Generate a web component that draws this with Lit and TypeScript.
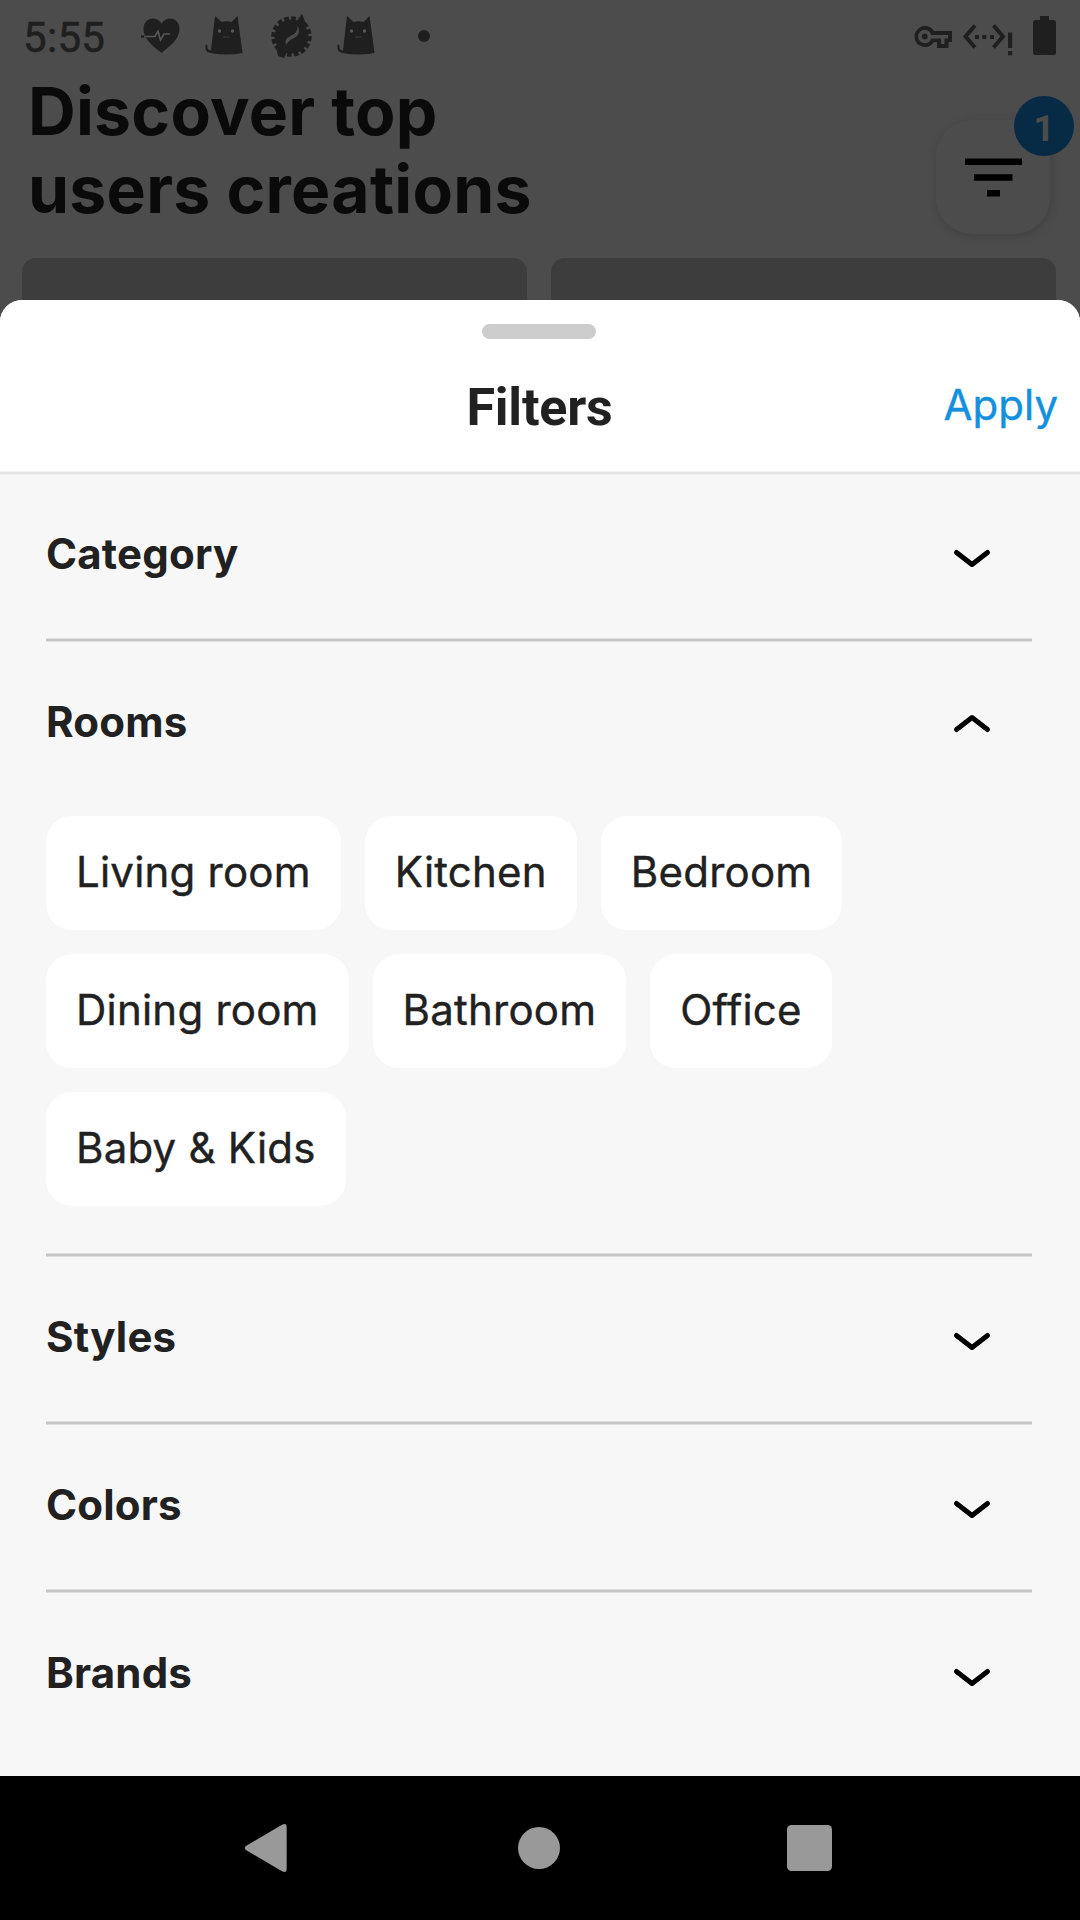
import { LitElement, html, svg, css } from "lit";
import { customElement, property } from "lit/decorators.js";

const cat = svg`<path d="M10.500 1 L17 7 Q22 5.500 27 7 L33 1 L38 38 Q22 41 6 38 Q0 37 1 30.500 Q2.200 28.500 3 31 Q2.500 35 6.500 35.500 Z"/>
  <circle class="hole" cx="15" cy="16" r="1.700"/><circle class="hole" cx="28" cy="16" r="1.700"/>
  <path class="faint" d="M18.500 22H25"/>`;

@customElement("status-bar")
export class StatusBar extends LitElement {
  static styles = css`
    :host { display: flex; align-items: center; height: 72px; padding: 0 23px 0 23px; box-sizing: border-box; }
    .time { font: 400 42px/72px Roboto, sans-serif; color: #1f1f1f; width: 118px; padding-top: 2px; height: 72px; box-sizing: border-box; letter-spacing: 0.3px; -webkit-text-stroke: 0.6px #1f1f1f; }
    svg { display: block; fill: #1f1f1f; flex: none; }
    .hole { fill: #575757; }
    .faint { stroke: #333; stroke-width: 1.5; fill: none; }
    .pulse { fill: none; stroke: #575757; stroke-width: 1.6; }
    .tail { fill: none; stroke: #1f1f1f; stroke-width: 2.4; }
    .line { fill: none; stroke: #1f1f1f; stroke-width: 4; }
    .space { flex: 1; }
    .teeth { fill: none; stroke: #1f1f1f; stroke-width: 4.5; stroke-dasharray: 4.6 2.4; }
    .gap { fill: #4c4c4c; }
  `;
  render() {
    return html`
      <span class="time">5:55</span>
      <svg width="44" height="72" viewBox="0 0 44 72">
        <path d="M20.500 53 C12 46 2.500 39 2.500 29 C2.500 18 15 15 20.500 23.500 C26 15 38.500 18 38.500 29 C38.500 39 29 46 20.500 53 Z"/>
        <path class="tail" d="M-1 36.500H5"/>
        <path class="pulse" d="M3 36.500H14L17 31L19.500 40L23 34H29"/>
      </svg>
      <svg width="62" height="72" viewBox="-19 0 62 72"><g transform="translate(0.500 15)">${cat}</g></svg>
      <svg width="67" height="72" viewBox="-23 0 67 72">
        <circle cx="21.500" cy="36.500" r="17"/>
        <circle class="teeth" cx="21.500" cy="36.500" r="18"/>
        <path d="M24 28L26 22L32 14L36 24ZM6 47L8 56L14 58L19 48Z"/>
        <path class="gap" d="M27.500 26Q32 34.500 23 38.500Q19 40 16 45Q14 38.500 20.500 36Q28 33.500 27.500 26Z"/>
      </svg>
      <svg width="66" height="72" viewBox="-22 0 66 72"><g transform="translate(0.500 15)">${cat}</g></svg>
      <svg width="51" height="72" viewBox="0 0 51 72"><circle cx="44" cy="36" r="6"/></svg>
      <span class="space"></span>
      <svg width="145" height="72" viewBox="912 0 145 72">
        <path fill-rule="evenodd" d="M925 26 A10.500 10.500 0 1 0 934 42 H937 V48 H948.500 V42 H952 V31 H934 A10.500 10.500 0 0 0 925 26 Z M924.800 29.800 Q930 30 931 35 H948 V38.500 H944.500 V44 H941 V38.500 H931 Q930 43 924.800 43.300 A6.750 6.750 0 0 1 924.800 29.800 Z"/>
        <circle cx="924.700" cy="36.500" r="3"/>
        <path class="line" d="M975 25.500L965.500 36.500L975 47.500M993.500 25.500L1003 36.500L993.500 47.500"/>
        <path d="M975 35h4v4h-4zM982.300 35h4v4h-4zM990 35h4v4h-4zM1008 32.500h4.200v15.500h-4.200zM1008 51h4.200v4.200h-4.200z"/>
        <path d="M1040 16h9v4h4.500q2.500 0 2.500 2.500v30q0 2.500-2.500 2.500h-18q-2.500 0-2.500-2.500v-30q0-2.500 2.500-2.500h4.500z"/>
      </svg>`;
  }
}

@customElement("filter-section")
export class FilterSection extends LitElement {
  @property() heading = "";
  @property({ type: Array }) options: string[] = [];
  static styles = css`
    :host { display: block; padding: 0 48px 0 46px; font-family: Inter, sans-serif; color: #212121; }
    .head { height: 164px; display: flex; justify-content: space-between; align-items: center; padding-right: 35px; }
    .name { font-size: 42px; line-height: 52px; font-weight: 700; letter-spacing: 0.2px; padding-bottom: 5px; }
    .head svg { display: block; fill: none; stroke: #000; stroke-width: 5; stroke-linecap: round; stroke-linejoin: round; }
    .rule { height: 4px; background: linear-gradient(#dedede 1px, #c6c6c6 1px 3px, #dedede 3px); }
    :host(:last-of-type) .rule { display: none; }
    .chips { display: flex; flex-wrap: wrap; gap: 24px; padding: 10px 100px 47px 0; }
    .chip { height: 114px; box-sizing: border-box; border-radius: 26px; background: #fff; padding: 0 30px; font-size: 42px; font-weight: 400; letter-spacing: 0.22px; -webkit-text-stroke: 0.4px #212121; line-height: 112px; white-space: nowrap; }
  `;
  render() {
    const open = this.options.length > 0;
    return html`
      <div class="head">
        <span class="name">${this.heading}</span>
        <svg width="50" height="50" viewBox="0 0 50 50">
          <path d=${open ? "M9.500 30.500L25 18.500L40.500 30.500" : "M9.500 21.500L25 33.500L40.500 21.500"} />
        </svg>
      </div>
      ${open ? html`<div class="chips">${this.options.map((o) => html`<span class="chip">${o}</span>`)}</div>` : null}
      <div class="rule"></div>`;
  }
}

@customElement("app-root")
export class AppRoot extends LitElement {
  static styles = css`
    :host { display: flex; flex-direction: column; width: 1080px; height: 1920px; background: #4c4c4c; font-family: Inter, sans-serif; overflow: hidden; }
    .backdrop { height: 300px; overflow: hidden; flex: none; }
    .hero { display: flex; justify-content: space-between; height: 186px; padding: 0 30px 0 28px; }
    .title { margin: 0; font-size: 66px; line-height: 78px; font-weight: 700; letter-spacing: 0.27px; color: #0a0a0a; }
    .filter { position: relative; margin-top: 48px; width: 114px; height: 114px; border-radius: 36px; background: #4c4c4c; box-shadow: 1px 2px 10px rgba(0, 0, 0, 0.16); }
    .filter svg { display: block; }
    .badge { position: absolute; left: 78px; top: -24px; width: 60px; height: 60px; border-radius: 50%; background: #082b45; color: #4c4c4c; font: 700 36.75px/65px Roboto, sans-serif; text-align: center; }
    .cards { display: flex; gap: 24px; padding: 0 24px 0 22px; }
    .card { flex: 1; height: 60px; border-radius: 14px; background: #3d3d3d; }
    .sheet { height: 1476px; flex: none; border-radius: 22px 22px 0 0; background: #f7f7f7; overflow: hidden; }
    .top { height: 171px; background: #fff; display: flex; flex-direction: column; align-items: center; }
    .grab { width: 114px; height: 15px; margin: 24px 0 0 -2px; border-radius: 7.5px; background: #ccc; }
    .bar { align-self: stretch; display: grid; grid-template-columns: 1fr auto 1fr; align-items: center; height: 110px; margin-top: 13px; padding: 0 22px 0 21px; }
    .label { grid-column: 2; padding-top: 2px; font: 700 52px/60px Roboto, sans-serif; letter-spacing: -0.2px; color: #212121; }
    .apply { justify-self: end; font-size: 42px; line-height: 52px; padding-bottom: 5px; color: #1590df; font-weight: 400; -webkit-text-stroke: 0.4px #1590df; }
    .edge { height: 4px; margin-bottom: -1px; background: linear-gradient(#f2f2f2 1px, #e5e5e5 1px 3px, #f2f2f2 3px); }
    .nav { height: 144px; background: #000; flex: none; }
    .nav svg { display: block; }
  `;
  private rooms = ["Living room", "Kitchen", "Bedroom", "Dining room", "Bathroom", "Office", "Baby & Kids"];
  render() {
    return html`
      <div class="backdrop">
        <status-bar></status-bar>
        <div class="hero">
          <h1 class="title">Discover top<br />users creations</h1>
          <div class="filter">
            <svg width="114" height="114" viewBox="0 0 114 114">
              <path d="M29 38.500h57v6.500h-57zM38 54.200h38.500v6.500h-38.500zM51 70h13v6.500h-13z" />
            </svg>
            <span class="badge">1</span>
          </div>
        </div>
        <div class="cards"><div class="card"></div><div class="card"></div></div>
      </div>
      <div class="sheet">
        <div class="top">
          <div class="grab"></div>
          <div class="bar"><span class="label">Filters</span><span class="apply">Apply</span></div>
        </div>
        <div class="edge"></div>
        <filter-section heading="Category"></filter-section>
        <filter-section heading="Rooms" .options=${this.rooms}></filter-section>
        <filter-section heading="Styles"></filter-section>
        <filter-section heading="Colors"></filter-section>
        <filter-section heading="Brands"></filter-section>
      </div>
      <div class="nav">
        <svg width="1080" height="144" viewBox="0 0 1080 144" fill="#999">
          <path d="M246 70 L282 48.700 Q286.700 46.500 286.700 51 V93 Q286.700 97.500 282 95.300 L246 74 Q243.500 72 246 70Z" />
          <circle cx="539" cy="72" r="21" />
          <rect x="787" y="49" width="45" height="46" rx="4.500" />
        </svg>
      </div>`;
  }
}
